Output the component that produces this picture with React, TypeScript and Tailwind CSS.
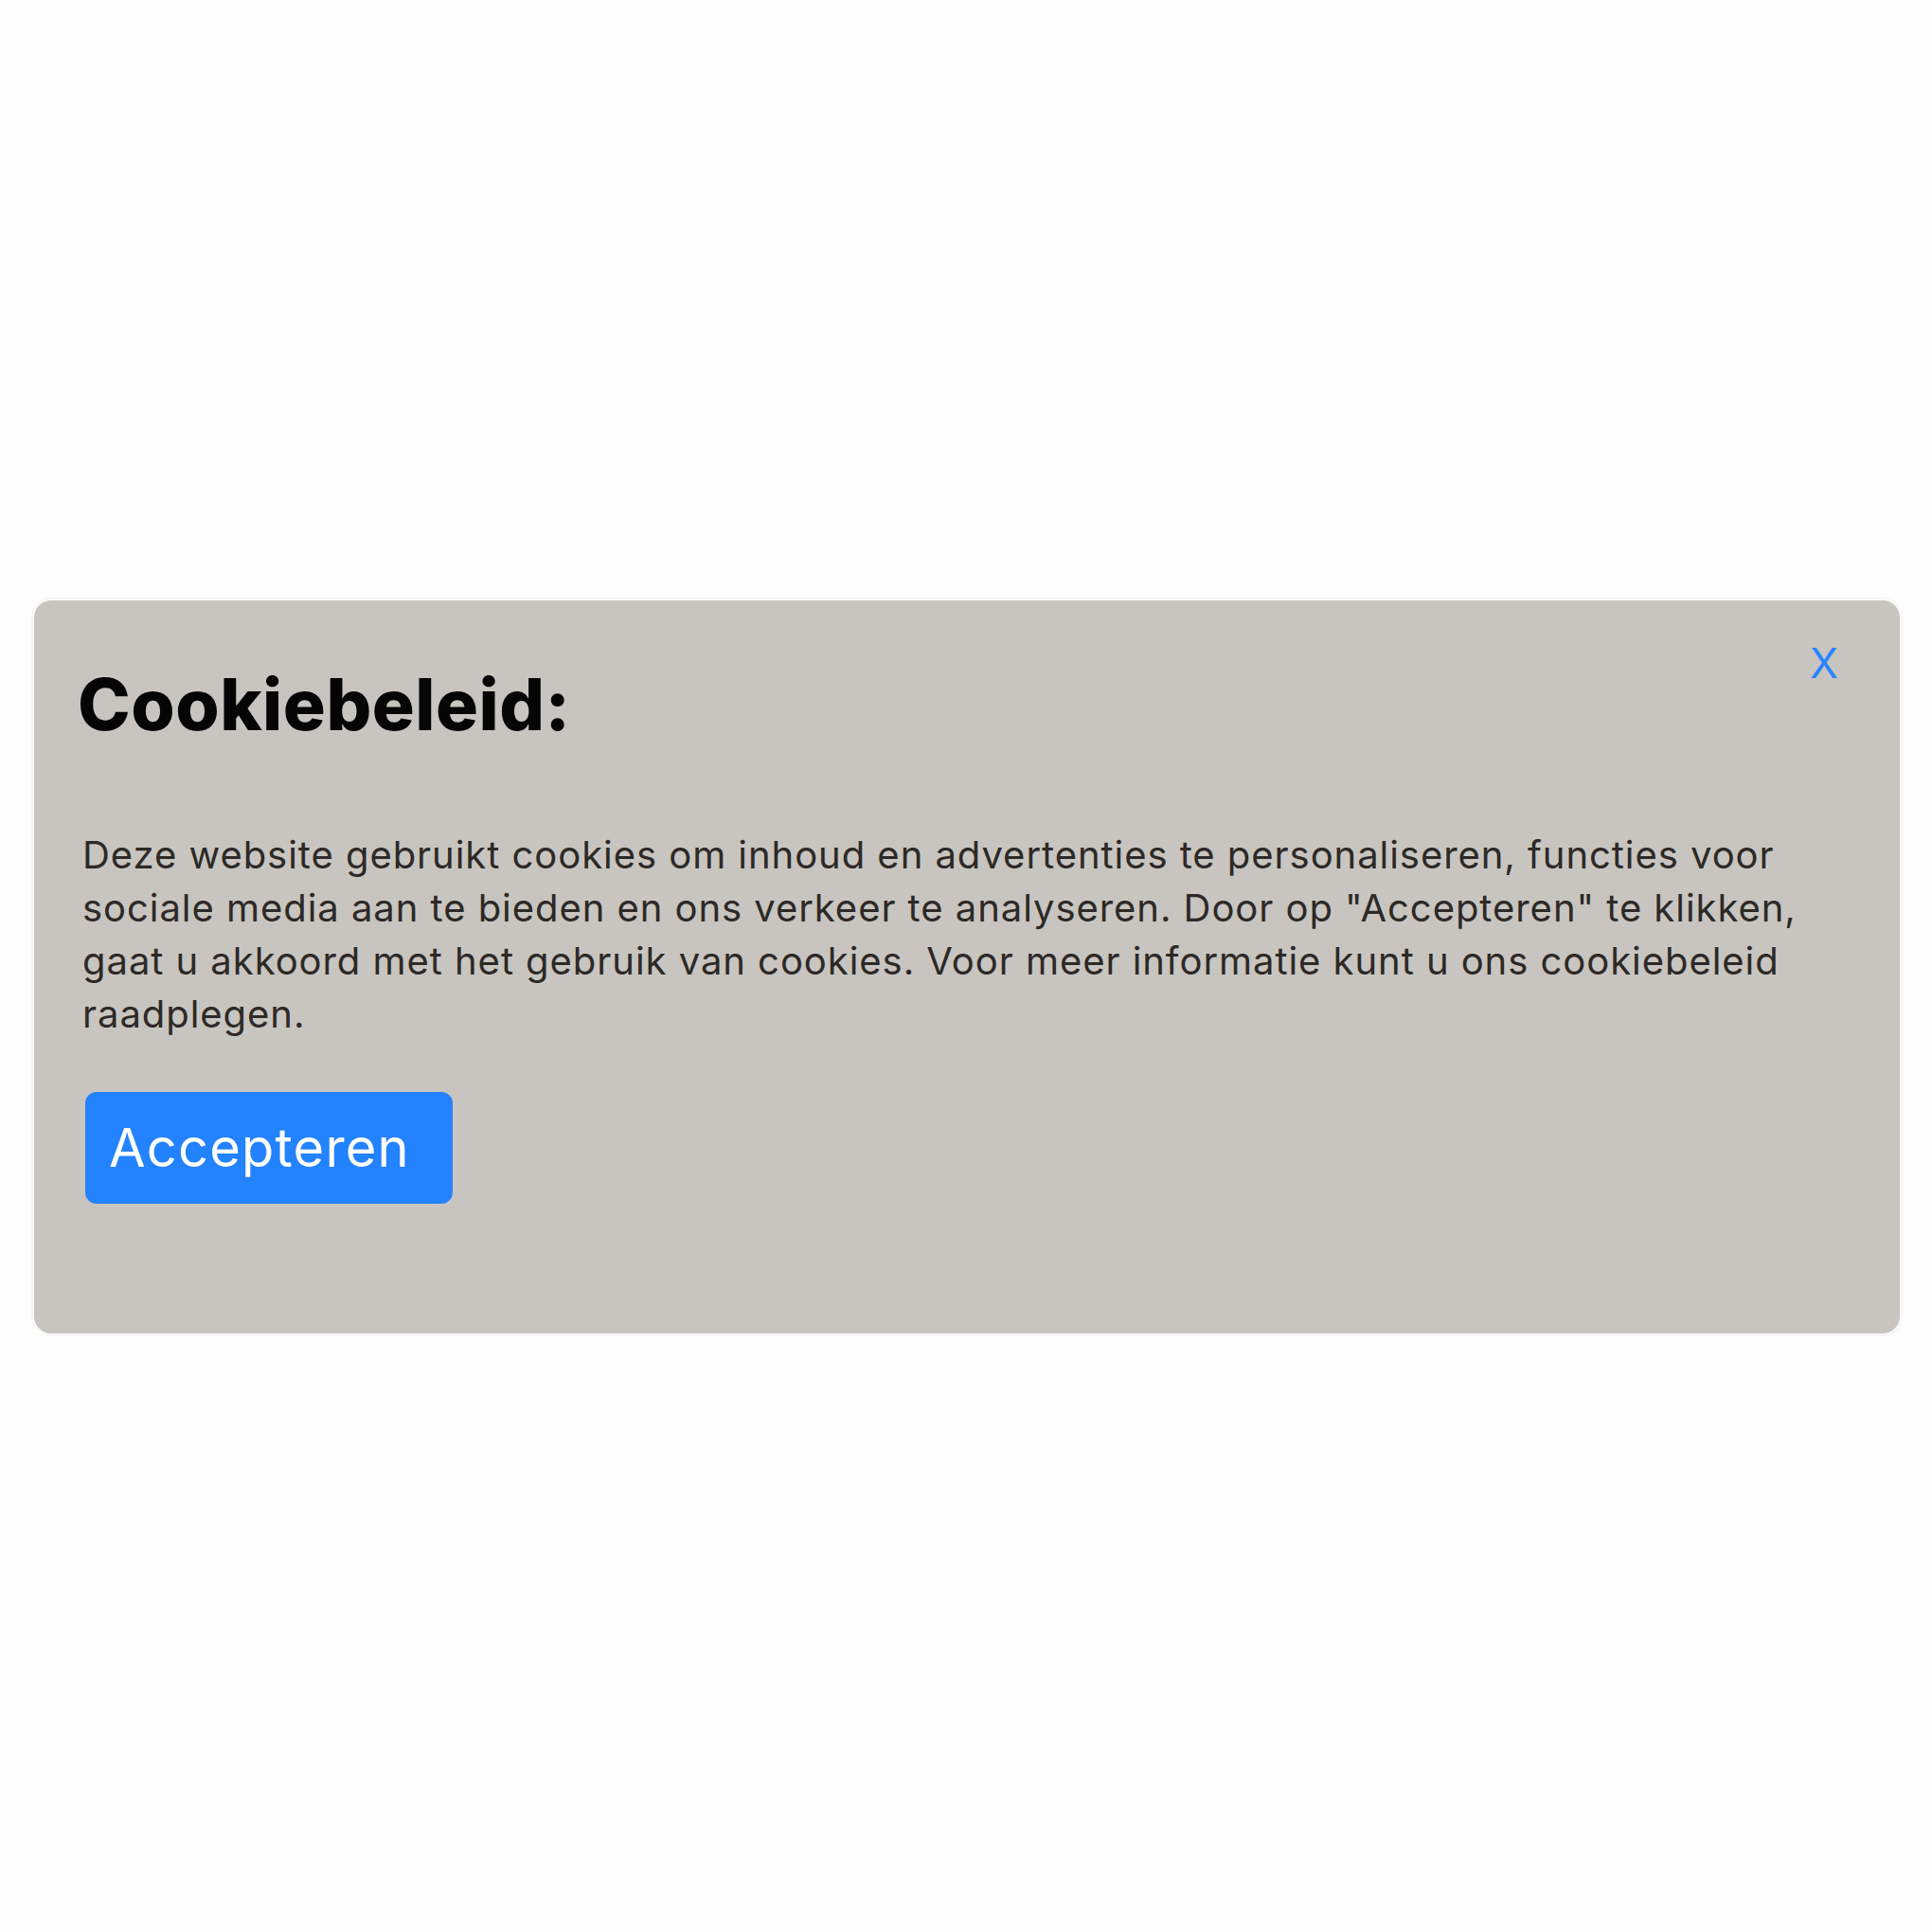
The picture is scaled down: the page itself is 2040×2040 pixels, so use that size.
import React from "react";

/**
 * Cookiemelding: titel, uitleg, accepteerknop en een sluitknop rechtsboven.
 */
const CookieBanner: React.FC = () => {
  return (
    <div className="relative w-full h-[774px] rounded-[18px] bg-[#c8c5c0] outline-2 outline-offset-1 outline-[#f6f6f6] pl-[46px] pt-[72px]">
      {/* sluiten */}
      <button className="absolute top-[44px] right-[65px] font-['Inter',sans-serif] text-[44px] leading-none font-normal text-[#2a85ff]">
        X
      </button>

      <h2 className="font-['Inter',sans-serif] text-[75px] leading-none font-extrabold tracking-[0.5px] text-[#050505]">
        Cookiebeleid:
      </h2>

      <p className="mt-[94px] ml-[5px] w-[1860px] font-['Inter',sans-serif] text-[40px] leading-[56px] tracking-[0.95px] text-[#2d2926]">
        Deze website gebruikt cookies om inhoud en advertenties te personaliseren, functies voor sociale media aan
        te bieden en ons verkeer te analyseren. Door op "Accepteren" te klikken, gaat u akkoord met het gebruik van
        cookies. Voor meer informatie kunt u ons cookiebeleid raadplegen.
      </p>

      <button className="mt-[54px] ml-[8px] flex items-center w-[388px] h-[118px] rounded-[12px] bg-[#2382fe] pl-[25px] font-['Inter',sans-serif] text-[56px] leading-none tracking-[1.2px] text-white">
        Accepteren
      </button>
    </div>
  );
};

export default function App() {
  return (
    <div className="min-h-screen bg-[#fdfdfd] pt-[634px] pl-[36px] pr-[34px]">
      <CookieBanner />
    </div>
  );
}
